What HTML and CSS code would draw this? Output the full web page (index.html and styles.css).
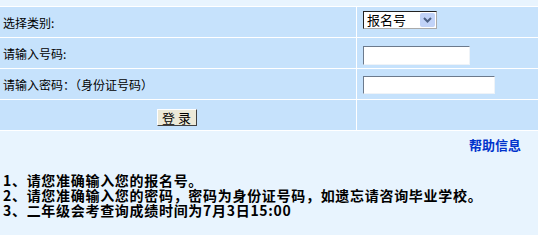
FILE: index.html
```html
<!doctype html>
<html lang="zh-CN">
  <head>
    <meta charset="UTF-8" />
    <title>成绩查询</title>
    <link rel="stylesheet" href="styles.css">
  </head>
  <body>
    <div class="top-band"></div>

    <div class="login-form">
      <div class="cell label">选择类别:</div>
      <div class="cell field">
        <div class="select-wrap">
          <select class="kind">
            <option>报名号</option>
          </select>
          <span class="select-arrow">
            <svg width="15" height="14" viewBox="0 0 15 14">
              <polyline points="4,5 7.5,8.5 11,5" fill="none" stroke="#4d6185" stroke-width="2" />
            </svg>
          </span>
        </div>
      </div>

      <div class="cell label">请输入号码:</div>
      <div class="cell field">
        <input type="text" class="input-number" />
      </div>

      <div class="cell label">请输入密码：（身份证号码）</div>
      <div class="cell field">
        <input type="password" class="input-password" />
      </div>

      <div class="cell submit">
        <button type="submit" class="btn-login">登 录</button>
      </div>
      <div class="cell"></div>
    </div>

    <div class="info">
      <div class="help"><a href="#">帮助信息</a></div>
      <ol class="notes">
        <li>1、请您准确输入您的报名号。</li>
        <li>2、请您准确输入您的密码，密码为身份证号码，如遗忘请咨询毕业学校。</li>
        <li>3、二年级会考查询成绩时间为7月3日15:00</li>
      </ol>
    </div>
  </body>
</html>
```

FILE: styles.css
```css
body {
  margin: 0;
  padding: 0;
  background: #e8f4fe;
  color: #000;
  font-family: 'Noto Sans CJK SC', 'Liberation Sans', sans-serif;
  font-size: 12px;
  overflow: hidden;
}

.top-band {
  height: 6px;
}

/* form table */
.login-form {
  display: grid;
  grid-template-columns: 356px 1fr;
  grid-auto-rows: 30px;
  gap: 1px;
  padding: 1px 0;
  background: #ffffff;
}

.cell {
  background: #c6e2fc;
  display: flex;
  align-items: center;
}

.label {
  padding-left: 3px;
}

.field {
  padding-left: 6px;
}

.submit {
  justify-content: center;
}

.select-wrap {
  position: relative;
  width: 74px;
  height: 18px;
  margin-top: -5px;
}

.kind {
  appearance: none;
  -webkit-appearance: none;
  width: 74px;
  height: 18px;
  margin: 0;
  padding: 0 0 0 3px;
  border: 1px solid;
  border-color: #222 #aaa #aaa #222;
  background: #ffffff;
  font-family: inherit;
  font-size: 13px;
  line-height: 16px;
  color: #000;
}

.select-arrow {
  position: absolute;
  top: 2px;
  right: 2px;
  width: 15px;
  height: 14px;
  background: #c1d3f8;
  border-radius: 2px;
  pointer-events: none;
}

.select-arrow svg {
  display: block;
}

input {
  height: 19px;
  box-sizing: border-box;
  margin: 0;
  padding: 0 2px;
  border: 1px solid;
  border-color: #6c7a8c #eef3f8 #eef3f8 #6c7a8c;
  background: #ffffff;
}

.input-number {
  width: 107px;
  margin-top: 5px;
}

.input-password {
  width: 132px;
  height: 18px;
  margin-top: 2px;
}

.btn-login {
  width: 40px;
  height: 17px;
  margin: 4px 0 0 -3px;
  padding: 0;
  border: 1px solid;
  border-color: #ffffff #404040 #404040 #ffffff;
  background: #ece9d8;
  font-family: inherit;
  font-size: 13px;
  line-height: 15px;
  color: #000;
}

/* help block */
.help {
  padding: 6px 17px 0 0;
  text-align: right;
  line-height: 16px;
}

.help a {
  color: #0033cc;
  font-size: 13px;
  font-weight: bold;
  text-decoration: none;
}

.notes {
  list-style: none;
  margin: 20px 0 0;
  padding: 0 0 0 3px;
  font-size: 14px;
  font-weight: bold;
  line-height: 15px;
  letter-spacing: 0.7px;
}
```
